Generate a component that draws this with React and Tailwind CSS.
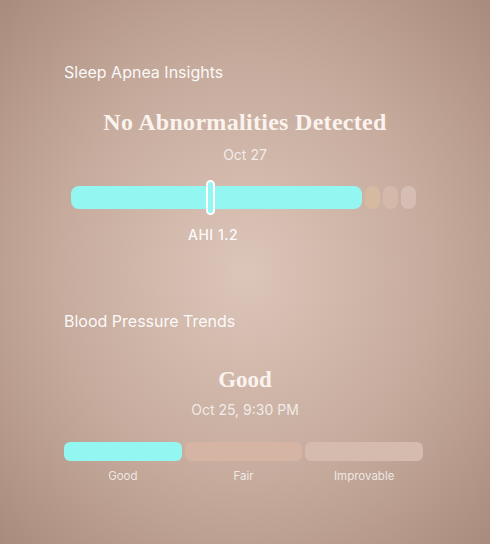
const sans = { fontFamily: '"Inter", "Liberation Sans", sans-serif' };

const App = () => {
    return (
        <div
            className="w-[490px] h-[544px] overflow-hidden bg-[radial-gradient(ellipse_at_50%_50%,#dcc5b9_0%,#c6ab9d_55%,#a98b7d_100%)] text-white"
            style={sans}
        >
            <div className="px-[64px] pt-[62px]">
                {/* Sleep apnea */}
                <h2 className="text-[16px] leading-[20px] text-white/95">Sleep Apnea Insights</h2>
                <div className="mt-[25px] text-center font-['Liberation_Serif',serif] text-[24px] font-bold leading-[30px] tracking-[0.3px] text-[#fbf3ee]">
                    No Abnormalities Detected
                </div>
                <div className="mt-[10px] text-center text-[14px] leading-[16px] text-white/75">Oct 27</div>
                <div className="mt-[16px] ml-[7px] flex h-[36px] items-center gap-[3px]">
                    <div className="relative h-[23px] w-[291px] rounded-[8px] bg-[#93f6f1]">
                        <div className="absolute left-[135px] top-[-6px] h-[35px] w-[9px] rounded-full border-[2px] border-white bg-[#93f6f1]" />
                    </div>
                    <div className="h-[23px] w-[15px] rounded-[7px] bg-[#d5b9a0]" />
                    <div className="h-[23px] w-[15px] rounded-[7px] bg-[#d4b8aa]" />
                    <div className="h-[23px] w-[15px] rounded-[7px] bg-[#d6bdb3]" />
                </div>
                <div className="mt-[12px] pl-[124px] text-[14px] font-medium leading-[16px] tracking-[0.5px] text-white/95">AHI 1.2</div>

                {/* Blood pressure */}
                <h2 className="mt-[68px] text-[16px] leading-[20px] text-white/95">Blood Pressure Trends</h2>
                <div className="mt-[35px] text-center font-['Liberation_Serif',serif] text-[23px] font-bold leading-[28px] text-[#fbf3ee]">
                    Good
                </div>
                <div className="mt-[8px] text-center text-[14px] leading-[16px] text-white/75">Oct 25, 9:30 PM</div>
                <div className="mt-[24px] flex w-[359px] gap-[3px]">
                    <div className="h-[19px] flex-1 rounded-[6px] bg-[#93f6f1]" />
                    <div className="h-[19px] flex-1 rounded-[6px] bg-[#d5b4a3]" />
                    <div className="h-[19px] flex-1 rounded-[6px] bg-[#d4bbae]" />
                </div>
                <div className="mt-[8px] flex w-[359px] gap-[3px] text-center text-[11.5px] leading-[14px] text-white/75">
                    <span className="flex-1">Good</span>
                    <span className="flex-1">Fair</span>
                    <span className="flex-1">Improvable</span>
                </div>
            </div>
        </div>
    );
};

export default App;
